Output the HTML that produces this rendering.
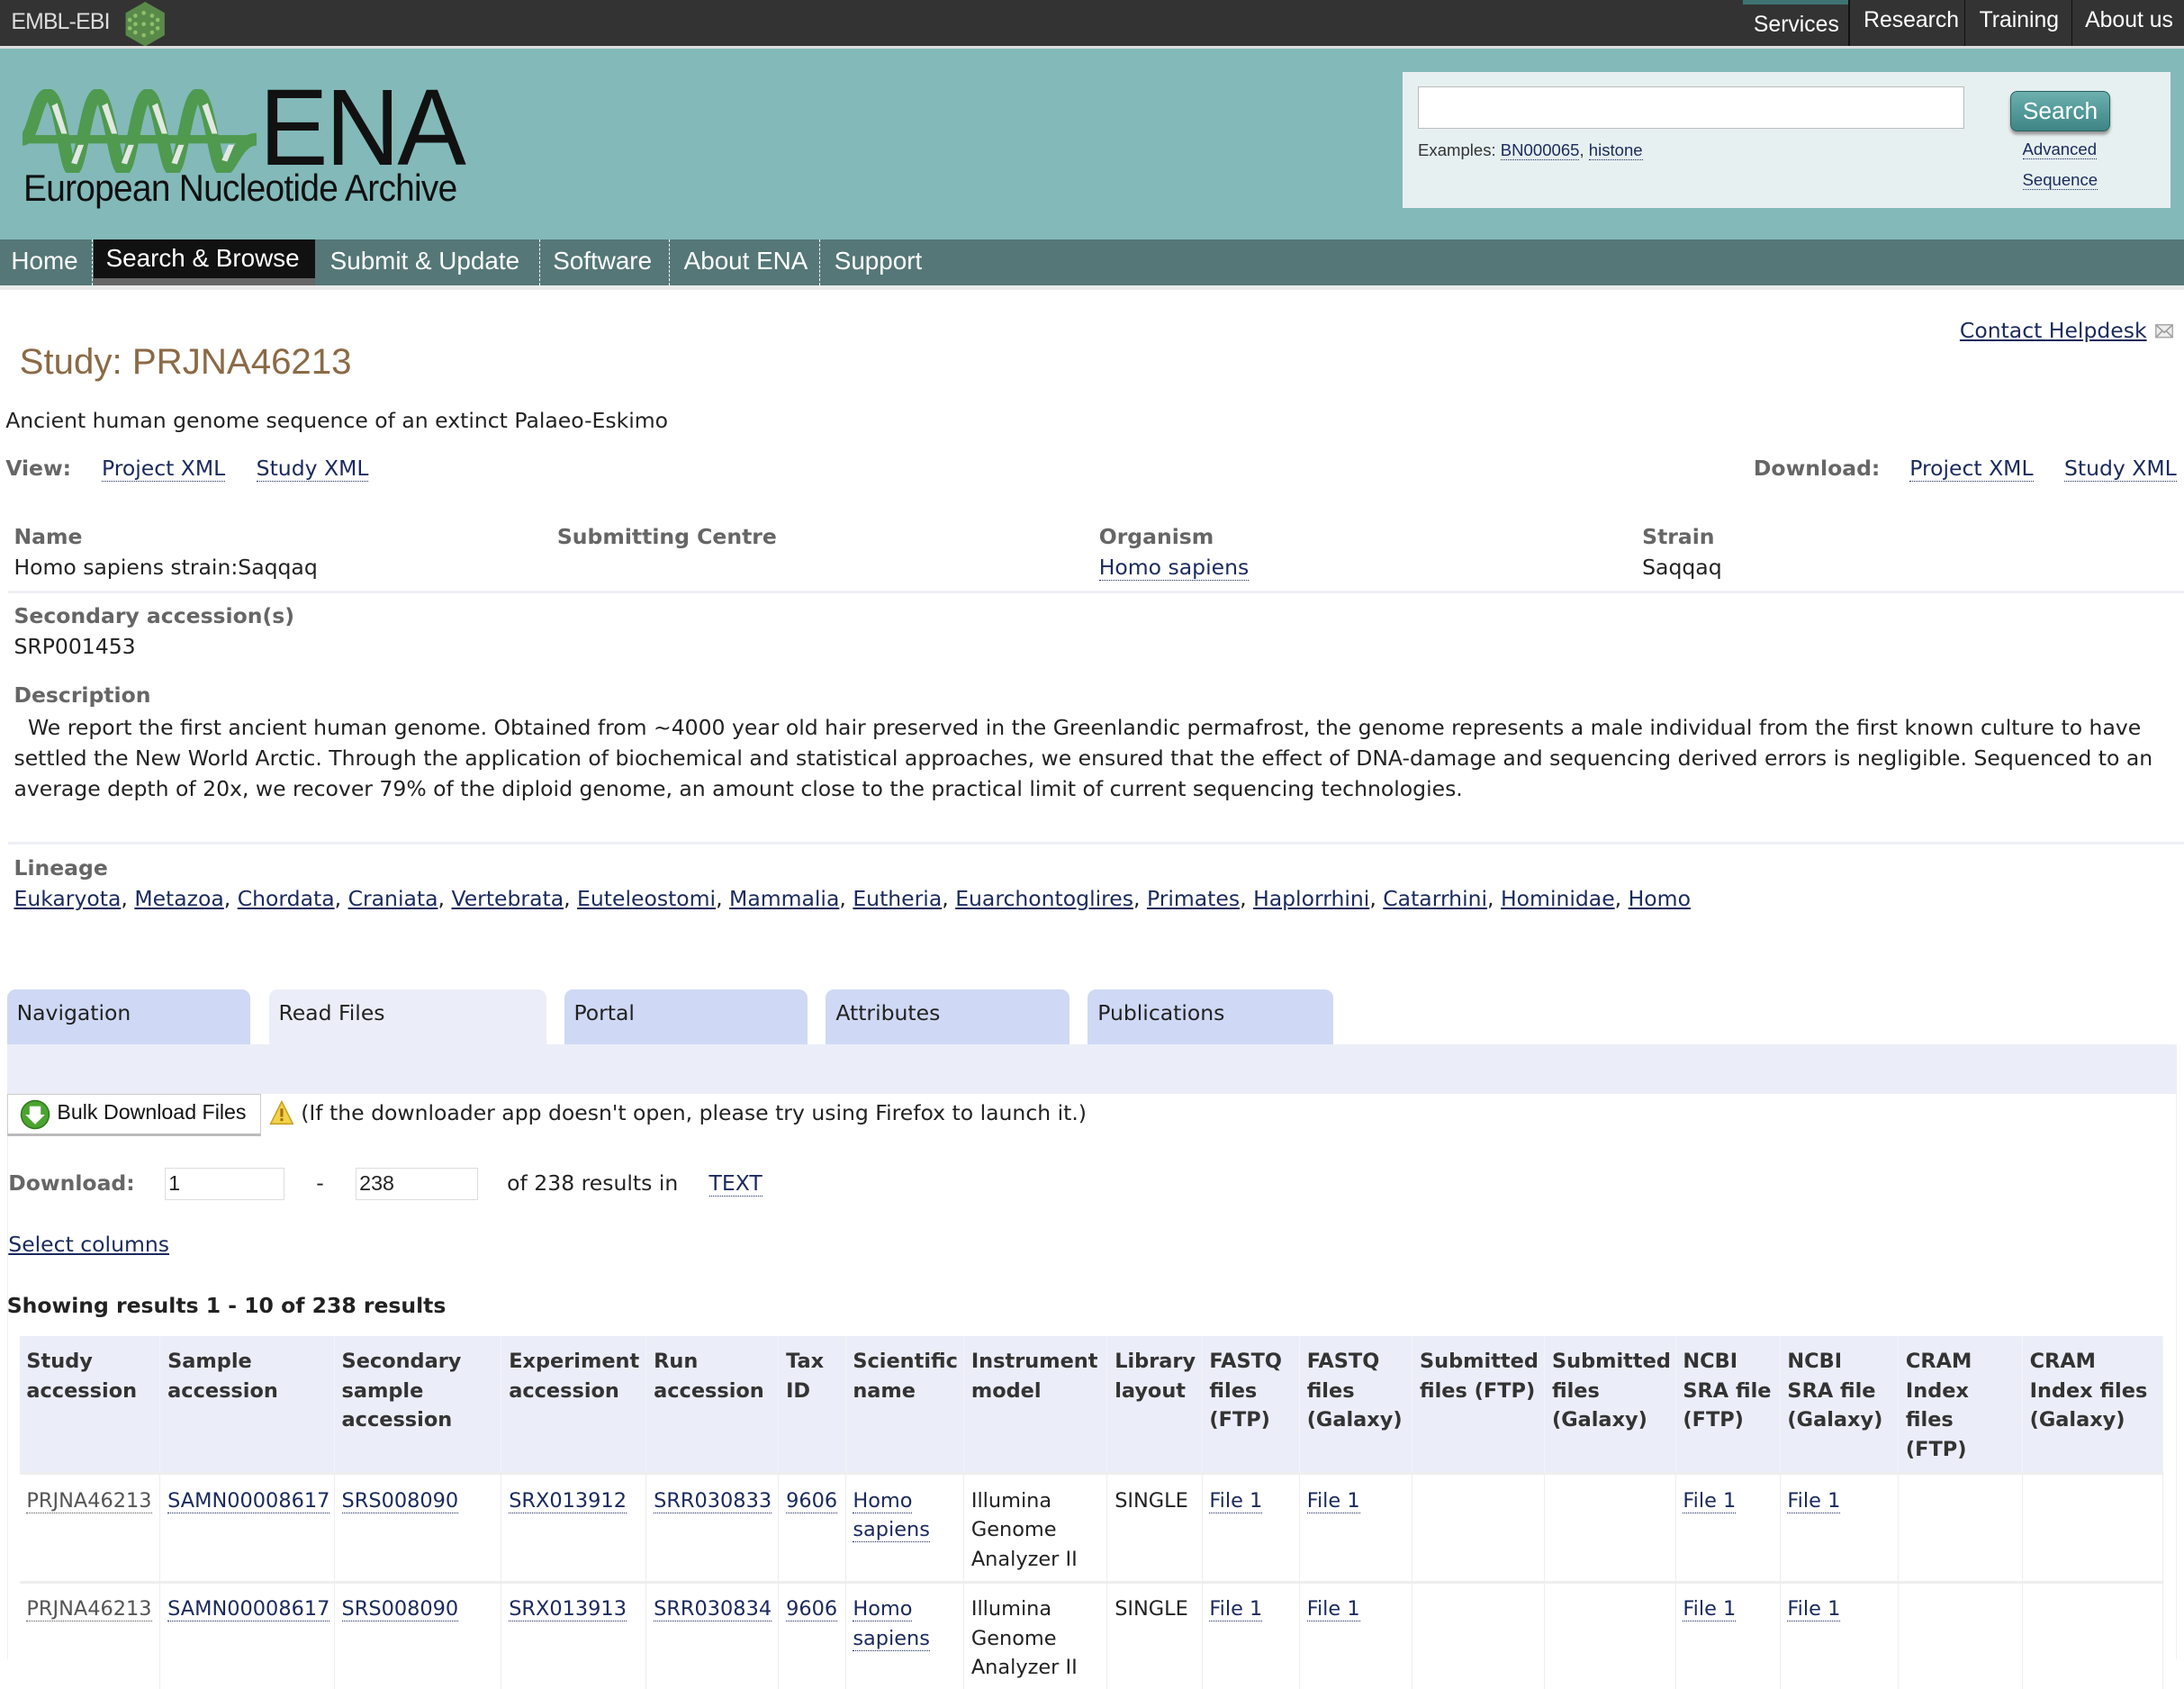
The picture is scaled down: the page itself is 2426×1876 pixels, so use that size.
<!DOCTYPE html>
<html><head><meta charset="utf-8">
<style>
html{zoom:1.5472}
body{margin:0;width:1568px;height:1190px;overflow:hidden;position:relative;background:#fff;font-family:"DejaVu Sans","Liberation Sans",sans-serif;font-size:15.2px;color:#222}
.a{position:absolute;white-space:nowrap}
.ln{color:#1b2a5c;text-decoration:none;border-bottom:1px dotted #1b2a5c}
.ul{color:#1b2a5c;text-decoration:underline}
.lb{font-weight:bold;color:#666}
.top{left:0;top:0;width:1568px;height:33px;background:#333;border-bottom:2px solid #ddd}
.tn{font-family:"Liberation Sans",sans-serif;color:#fff;font-size:16px;top:6px}
.sep{top:0;width:1px;height:33px;background:#111}
.nav{font-family:"Liberation Sans",sans-serif;color:#fff;font-size:18px;top:177px}
.dsep{top:172px;height:33px;border-left:1px dashed #fff}
.tab{top:710px;height:40px;background:#cfd9f5;border-radius:6px 6px 0 0;font-size:15.2px;box-sizing:border-box;padding:8px 7px}
table{position:absolute;left:14px;top:959px;border-collapse:collapse;table-layout:fixed;width:1539px;font-size:14.5px}
th{background:#ebeef8;text-align:left;vertical-align:top;padding:8px 5px 6px;line-height:21px;height:84px;border-right:1px solid #f4f4f8;font-weight:bold;color:#333}
td{vertical-align:top;padding:8px 5px 5px;line-height:21px;border-right:1px solid #eee;border-top:2px solid #eee}
</style></head><body>
<div class="a top"></div>
<div class="a" style="left:8px;top:7px;color:#ddd;font-family:'Liberation Sans',sans-serif;font-size:16px;letter-spacing:-0.5px">EMBL-EBI</div>
<svg class="a" style="left:89px;top:1px" width="30" height="32"><polygon points="15,0 29,8 29,24 15,32 1,24 1,8" fill="#5a8a4a"/><g fill="#8cc06a"><circle cx="8" cy="10" r="1.5"/><circle cx="14" cy="8" r="1.5"/><circle cx="20" cy="10" r="1.5"/><circle cx="8" cy="16" r="1.5"/><circle cx="14" cy="16" r="1.5"/><circle cx="20" cy="16" r="1.5"/><circle cx="8" cy="22" r="1.5"/><circle cx="14" cy="24" r="1.5"/><circle cx="20" cy="22" r="1.5"/><circle cx="24" cy="13" r="1.5"/><circle cx="24" cy="19" r="1.5"/><circle cx="4" cy="13" r="1.5"/><circle cx="4" cy="19" r="1.5"/></g></svg>
<div class="a" style="left:1251px;top:0;width:77px;height:3px;background:#3f7373"></div>
<div class="a tn" style="left:1259px;top:9px">Services</div>
<div class="a sep" style="left:1327px"></div>
<div class="a tn" style="left:1338px">Research</div>
<div class="a sep" style="left:1410px"></div>
<div class="a tn" style="left:1421px">Training</div>
<div class="a sep" style="left:1487px"></div>
<div class="a tn" style="left:1497px">About us</div>

<div class="a" style="left:0;top:35px;width:1568px;height:137px;background:#83b9b9"></div>
<svg class="a" style="left:16px;top:64px" width="170" height="60" viewBox="0 0 170 60">
<path d="M0,36 C8,36 10,4 18,4 C28,4 30,58 36,58 C42,58 46,4 54,4 C62,4 66,58 72,58 C78,58 82,4 90,4 C98,4 102,58 108,58 C114,58 118,4 126,4 C134,4 138,58 144,58 C150,58 154,36 168,36" stroke="#4f9a4f" stroke-width="9" fill="none"/>
<rect x="0" y="33" width="168" height="6" fill="#4f9a4f"/>
<g fill="#e2e8e2"><polygon points="21,12 25,10 32,32 28,32"/><polygon points="57,12 61,10 68,32 64,32"/><polygon points="93,12 97,10 104,32 100,32"/><polygon points="129,12 133,10 140,32 136,32"/><polygon points="40,40 44,40 39,54 35,53"/><polygon points="76,40 80,40 75,54 71,53"/><polygon points="112,40 116,40 111,54 107,53"/><polygon points="148,40 152,40 147,52 143,51"/></g>
</svg>
<div class="a" style="left:186px;top:52px;font-family:'Liberation Sans',sans-serif;font-size:78px;color:#111;letter-spacing:-2px;line-height:80px;transform:scaleX(0.95);transform-origin:left">ENA</div>
<div class="a" style="left:17px;top:118px;font-family:'Liberation Sans',sans-serif;font-size:27px;color:#111;letter-spacing:-0.5px;line-height:34px;transform:scaleX(0.93);transform-origin:left">European Nucleotide Archive</div>

<div class="a" style="left:1007px;top:52px;width:550px;height:96px;background:#e6f0f0;border:1px solid #eee"></div>
<div class="a" style="left:1018px;top:62px;width:391px;height:29px;background:#fff;border:1px solid #bbb"></div>
<div class="a" style="left:1443px;top:65px;width:71px;height:28px;border-radius:5px;background:linear-gradient(#6cb0b0,#3e8585);border:1px solid #2e6060;box-shadow:0 2px 2px #999;color:#fff;font-family:'Liberation Sans',sans-serif;font-size:17px;text-align:center;line-height:28px">Search</div>
<div class="a" style="left:1018px;top:101px;font-family:'Liberation Sans',sans-serif;font-size:12px;color:#333">Examples: <span class="ln">BN000065</span>, <span class="ln">histone</span></div>
<div class="a" style="left:1452px;top:100px;font-family:'Liberation Sans',sans-serif;font-size:12px"><span class="ln">Advanced</span></div>
<div class="a" style="left:1452px;top:122px;font-family:'Liberation Sans',sans-serif;font-size:12px"><span class="ln">Sequence</span></div>

<div class="a" style="left:0;top:172px;width:1568px;height:33px;background:#557777"></div>
<div class="a" style="left:0;top:205px;width:1568px;height:3px;background:#ebebeb"></div>
<div class="a" style="left:67px;top:172px;width:159px;height:33px;background:#111"></div>
<div class="a" style="left:67px;top:200px;width:159px;height:5px;background:#666"></div>
<div class="a nav" style="left:8px">Home</div>
<div class="a dsep" style="left:66px"></div>
<div class="a nav" style="left:76px;top:175px">Search &amp; Browse</div>
<div class="a nav" style="left:237px">Submit &amp; Update</div>
<div class="a dsep" style="left:387px"></div>
<div class="a nav" style="left:397px">Software</div>
<div class="a dsep" style="left:480px"></div>
<div class="a nav" style="left:491px">About ENA</div>
<div class="a dsep" style="left:588px"></div>
<div class="a nav" style="left:599px">Support</div>

<div class="a" style="left:1407px;top:228px;font-size:15.2px"><span class="ul">Contact Helpdesk</span></div>
<svg class="a" style="left:1547px;top:233px" width="13" height="10"><rect x="0.5" y="0.5" width="12" height="9" fill="#eee" stroke="#aaa"/><path d="M1,1 L6.5,6 L12,1 M1,9 L5,5 M12,9 L8,5" stroke="#999" fill="none"/></svg>

<div class="a" style="left:14px;top:245px;font-family:'Liberation Sans',sans-serif;font-size:26px;color:#8b6a45">Study: PRJNA46213</div>
<div class="a" style="left:4px;top:293px">Ancient human genome sequence of an extinct Palaeo-Eskimo</div>
<div class="a lb" style="left:4px;top:327px">View:</div>
<div class="a" style="left:73px;top:327px"><span class="ln">Project XML</span></div>
<div class="a" style="left:184px;top:327px"><span class="ln">Study XML</span></div>
<div class="a lb" style="left:1259px;top:327px">Download:</div>
<div class="a" style="left:1371px;top:327px"><span class="ln">Project XML</span></div>
<div class="a" style="left:1482px;top:327px"><span class="ln">Study XML</span></div>

<div class="a lb" style="left:10px;top:376px">Name</div>
<div class="a" style="left:10px;top:398px">Homo sapiens strain:Saqqaq</div>
<div class="a lb" style="left:400px;top:376px">Submitting Centre</div>
<div class="a lb" style="left:789px;top:376px">Organism</div>
<div class="a" style="left:789px;top:398px"><span class="ln">Homo sapiens</span></div>
<div class="a lb" style="left:1179px;top:376px">Strain</div>
<div class="a" style="left:1179px;top:398px">Saqqaq</div>
<div class="a" style="left:6px;top:424px;width:1562px;height:2px;background:#eef0f6"></div>
<div class="a lb" style="left:10px;top:433px">Secondary accession(s)</div>
<div class="a" style="left:10px;top:455px">SRP001453</div>
<div class="a lb" style="left:10px;top:490px">Description</div>
<div class="a" style="left:10px;top:511px;width:1550px;white-space:normal;line-height:22px;text-indent:10px">We report the first ancient human genome. Obtained from ~4000 year old hair preserved in the Greenlandic permafrost, the genome represents a male individual from the first known culture to have settled the New World Arctic. Through the application of biochemical and statistical approaches, we ensured that the effect of DNA-damage and sequencing derived errors is negligible. Sequenced to an average depth of 20x, we recover 79% of the diploid genome, an amount close to the practical limit of current sequencing technologies.</div>
<div class="a" style="left:6px;top:604px;width:1562px;height:2px;background:#eef0f6"></div>
<div class="a lb" style="left:10px;top:614px">Lineage</div>
<div class="a" style="left:10px;top:636px"><span class="ul">Eukaryota</span>, <span class="ul">Metazoa</span>, <span class="ul">Chordata</span>, <span class="ul">Craniata</span>, <span class="ul">Vertebrata</span>, <span class="ul">Euteleostomi</span>, <span class="ul">Mammalia</span>, <span class="ul">Eutheria</span>, <span class="ul">Euarchontoglires</span>, <span class="ul">Primates</span>, <span class="ul">Haplorrhini</span>, <span class="ul">Catarrhini</span>, <span class="ul">Hominidae</span>, <span class="ul">Homo</span></div>

<div class="a tab" style="left:5px;width:175px">Navigation</div>
<div class="a tab" style="left:193px;width:199px;background:#ebeef8">Read Files</div>
<div class="a tab" style="left:405px;width:175px">Portal</div>
<div class="a tab" style="left:593px;width:175px">Attributes</div>
<div class="a tab" style="left:781px;width:176px">Publications</div>
<div class="a" style="left:5px;top:750px;width:1557px;height:35px;background:#ebeef8"></div>
<div class="a" style="left:5px;top:785px;width:1px;height:406px;background:#eef0f6"></div>
<div class="a" style="left:1562px;top:750px;width:1px;height:441px;background:#eef0f6"></div>

<div class="a" style="left:5px;top:785px;width:181px;height:28px;border:1px solid #ccc;border-bottom:2px solid #bbb;background:#fff"></div>
<svg class="a" style="left:14px;top:789px" width="22" height="22"><circle cx="11" cy="11" r="10" fill="#4aa52e" stroke="#2f7a1c"/><path d="M7,5 H15 V11 H18 L11,18 L4,11 H7Z" fill="#fff"/></svg>
<div class="a" style="left:41px;top:790px;font-family:'Liberation Sans',sans-serif;font-size:15px;color:#111">Bulk Download Files</div>
<svg class="a" style="left:193px;top:790px" width="18" height="18"><polygon points="9,1 17,17 1,17" fill="#f3d24a" stroke="#c8a020"/><rect x="8" y="6" width="2" height="6" fill="#a07010"/><rect x="8" y="13" width="2" height="2" fill="#a07010"/></svg>
<div class="a" style="left:216px;top:790px">(If the downloader app doesn't open, please try using Firefox to launch it.)</div>

<div class="a lb" style="left:6px;top:840px">Download:</div>
<div class="a" style="left:118px;top:838px;width:85px;height:22px;border:1px solid #ddd"></div>
<div class="a" style="left:121px;top:841px;font-family:'Liberation Sans',sans-serif;font-size:15px">1</div>
<div class="a" style="left:227px;top:840px">-</div>
<div class="a" style="left:255px;top:838px;width:87px;height:22px;border:1px solid #ddd"></div>
<div class="a" style="left:258px;top:841px;font-family:'Liberation Sans',sans-serif;font-size:15px">238</div>
<div class="a" style="left:364px;top:840px">of 238 results in</div>
<div class="a" style="left:509px;top:840px"><span class="ln">TEXT</span></div>
<div class="a" style="left:6px;top:884px"><span class="ul">Select columns</span></div>
<div class="a" style="left:5px;top:928px;font-weight:bold;color:#222">Showing results 1 - 10 of 238 results</div>

<table>
<colgroup><col style="width:101px"><col style="width:125px"><col style="width:120px"><col style="width:104px"><col style="width:95px"><col style="width:48px"><col style="width:85px"><col style="width:103px"><col style="width:68px"><col style="width:70px"><col style="width:81px"><col style="width:95px"><col style="width:94px"><col style="width:75px"><col style="width:85px"><col style="width:89px"><col style="width:101px"></colgroup>
<tr><th>Study accession</th><th>Sample accession</th><th>Secondary sample accession</th><th>Experiment accession</th><th>Run accession</th><th>Tax ID</th><th>Scientific name</th><th>Instrument model</th><th>Library layout</th><th>FASTQ files (FTP)</th><th>FASTQ files (Galaxy)</th><th>Submitted files&nbsp;(FTP)</th><th>Submitted files (Galaxy)</th><th>NCBI SRA&nbsp;file (FTP)</th><th>NCBI SRA file (Galaxy)</th><th>CRAM Index files (FTP)</th><th>CRAM Index files (Galaxy)</th></tr>
<tr><td><span class="ln" style="color:#555;border-color:#555">PRJNA46213</span></td><td><span class="ln">SAMN00008617</span></td><td><span class="ln">SRS008090</span></td><td><span class="ln">SRX013912</span></td><td><span class="ln">SRR030833</span></td><td><span class="ln">9606</span></td><td><span class="ln">Homo</span> <span class="ln">sapiens</span></td><td>Illumina Genome Analyzer II</td><td>SINGLE</td><td><span class="ln">File 1</span></td><td><span class="ln">File 1</span></td><td></td><td></td><td><span class="ln">File 1</span></td><td><span class="ln">File 1</span></td><td></td><td></td></tr>
<tr><td><span class="ln" style="color:#555;border-color:#555">PRJNA46213</span></td><td><span class="ln">SAMN00008617</span></td><td><span class="ln">SRS008090</span></td><td><span class="ln">SRX013913</span></td><td><span class="ln">SRR030834</span></td><td><span class="ln">9606</span></td><td><span class="ln">Homo</span> <span class="ln">sapiens</span></td><td>Illumina Genome Analyzer II</td><td>SINGLE</td><td><span class="ln">File 1</span></td><td><span class="ln">File 1</span></td><td></td><td></td><td><span class="ln">File 1</span></td><td><span class="ln">File 1</span></td><td></td><td></td></tr>
</table>
</body></html>
